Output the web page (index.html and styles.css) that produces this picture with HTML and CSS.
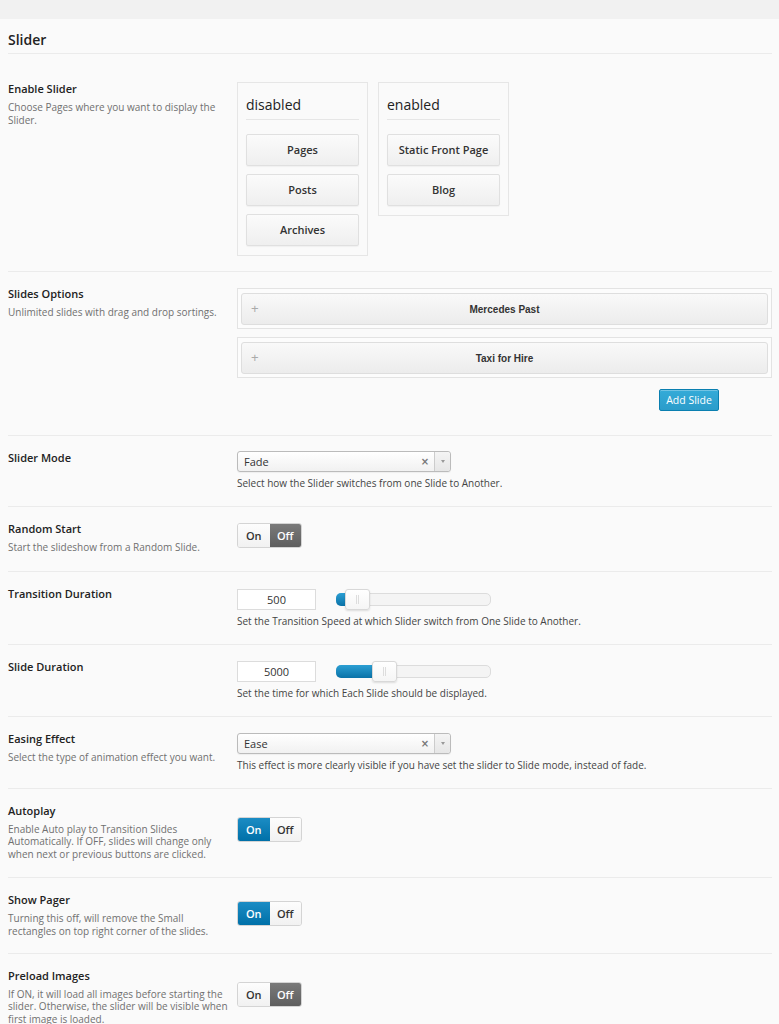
FILE: index.html
```html
<!DOCTYPE html>
<html>
<head>
<meta charset="utf-8">
<link rel="stylesheet" href="styles.css">
</head>
<body>
<div class="topbar"></div>
<div class="panel">
  <h2 class="panel-title">Slider</h2>

  <div class="row row-tight">
    <div class="label">
      <div class="title">Enable Slider</div>
      <div class="desc">Choose Pages where you want to display the Slider.</div>
    </div>
    <div class="field field-top1">
      <div class="sorters">
        <div class="sorter">
          <div class="sorter-head">disabled</div>
          <div class="sorter-list">
            <div class="chip">Pages</div>
            <div class="chip">Posts</div>
            <div class="chip">Archives</div>
          </div>
        </div>
        <div class="sorter">
          <div class="sorter-head">enabled</div>
          <div class="sorter-list">
            <div class="chip">Static Front Page</div>
            <div class="chip">Blog</div>
          </div>
        </div>
      </div>
    </div>
  </div>

  <div class="row">
    <div class="label">
      <div class="title">Slides Options</div>
      <div class="desc">Unlimited slides with drag and drop sortings.</div>
    </div>
    <div class="field field-top2">
      <div class="slides">
        <div class="slide"><div class="slide-bar"><span class="plus">+</span><span class="slide-name">Mercedes Past</span></div></div>
        <div class="slide"><div class="slide-bar"><span class="plus">+</span><span class="slide-name">Taxi for Hire</span></div></div>
      </div>
      <div class="add-wrap"><button class="add-btn">Add Slide</button></div>
    </div>
  </div>

  <div class="row">
    <div class="label">
      <div class="title">Slider Mode</div>
    </div>
    <div class="field field-top1">
      <div class="select"><span class="select-val">Fade</span><span class="select-x">×</span><span class="select-arrow"><span class="tri"></span></span></div>
      <div class="help">Select how the Slider switches from one Slide to Another.</div>
    </div>
  </div>

  <div class="row row-loose">
    <div class="label">
      <div class="title">Random Start</div>
      <div class="desc">Start the slideshow from a Random Slide.</div>
    </div>
    <div class="field field-center">
      <div class="toggle"><span class="tg">On</span><span class="tg tg-off-active">Off</span></div>
    </div>
  </div>

  <div class="row">
    <div class="label">
      <div class="title">Transition Duration</div>
    </div>
    <div class="field field-top3">
      <div class="range-row">
        <div class="num">500</div>
        <div class="track">
          <div class="fill" style="width: 14px"></div>
          <div class="handle" style="left: 8px"><span class="grip"></span></div>
        </div>
      </div>
      <div class="help">Set the Transition Speed at which Slider switch from One Slide to Another.</div>
    </div>
  </div>

  <div class="row">
    <div class="label">
      <div class="title">Slide Duration</div>
    </div>
    <div class="field field-top2">
      <div class="range-row">
        <div class="num">5000</div>
        <div class="track">
          <div class="fill" style="width: 42px"></div>
          <div class="handle" style="left: 35px"><span class="grip"></span></div>
        </div>
      </div>
      <div class="help">Set the time for which Each Slide should be displayed.</div>
    </div>
  </div>

  <div class="row">
    <div class="label">
      <div class="title">Easing Effect</div>
      <div class="desc">Select the type of animation effect you want.</div>
    </div>
    <div class="field field-top2">
      <div class="select"><span class="select-val">Ease</span><span class="select-x">×</span><span class="select-arrow"><span class="tri"></span></span></div>
      <div class="help">This effect is more clearly visible if you have set the slider to Slide mode, instead of fade.</div>
    </div>
  </div>

  <div class="row row-loose">
    <div class="label">
      <div class="title">Autoplay</div>
      <div class="desc">Enable Auto play to Transition Slides Automatically. If OFF, slides will change only when next or previous buttons are clicked.</div>
    </div>
    <div class="field field-center">
      <div class="toggle"><span class="tg tg-on-active">On</span><span class="tg">Off</span></div>
    </div>
  </div>

  <div class="row row-tight">
    <div class="label">
      <div class="title">Show Pager</div>
      <div class="desc">Turning this off, will remove the Small rectangles on top right corner of the slides.</div>
    </div>
    <div class="field field-center">
      <div class="toggle"><span class="tg tg-on-active">On</span><span class="tg">Off</span></div>
    </div>
  </div>

  <div class="row">
    <div class="label">
      <div class="title">Preload Images</div>
      <div class="desc">If ON, it will load all images before starting the slider. Otherwise, the slider will be visible when first image is loaded.</div>
    </div>
    <div class="field field-center">
      <div class="toggle"><span class="tg">On</span><span class="tg tg-off-active">Off</span></div>
    </div>
  </div>
</div>
</body>
</html>
```

FILE: styles.css
```css
* { box-sizing: border-box; }
html, body { margin: 0; padding: 0; }
body {
  background: #fafafa;
  font-family: "Open Sans", "Liberation Sans", sans-serif;
  color: #333;
}
.topbar { height: 19px; background: #f1f1f1; }
.panel { background: #fafafa; }
.panel-title {
  margin: 0 7px 13px 8px;
  padding: 11px 0 3px;
  font-size: 14px;
  line-height: 20px;
  font-weight: 600;
  color: #222;
  border-bottom: 1px solid #ebebeb;
}
.row {
  display: grid;
  grid-template-columns: 224px 1fr;
  column-gap: 5px;
  margin: 0 7px 0 8px;
  padding: 14px 0 16px;
  border-bottom: 1px solid #ebebeb;
}
.row-tight { padding-bottom: 15px; }
.row-loose { padding-bottom: 17px; }
.row:last-child { border-bottom: none; }
.title {
  font-size: 11px;
  line-height: 16px;
  font-weight: 600;
  color: #222;
}
.desc {
  margin-top: 4px;
  font-size: 10px;
  line-height: 12.6px;
  color: #707070;
  padding-right: 4px;
}
.field { min-width: 0; }
.field-top1 { padding-top: 1px; }
.field-top2 { padding-top: 2px; }
.field-top3 { padding-top: 3px; }
.field-center { align-self: center; margin-top: -3px; }
.help {
  margin-top: 5px;
  font-size: 10px;
  line-height: 13px;
  color: #444;
}

/* sorters */
.sorters { display: flex; gap: 10px; align-items: flex-start; }
.sorter {
  width: 131px;
  border: 1px solid #e6e6e6;
  background: #fafafa;
  padding: 0 8px 9px;
}
.sorter-head {
  padding: 12px 0 4px;
  font-size: 14px;
  line-height: 20px;
  color: #222;
  border-bottom: 1px solid #e6e6e6;
}
.sorter-list {
  display: flex;
  flex-direction: column;
  gap: 8px;
  margin-top: 14px;
}
.chip {
  height: 32px;
  border: 1px solid #e0e0e0;
  border-radius: 2px;
  background: linear-gradient(#fbfbfb, #efefef);
  box-shadow: 0 1px 1px rgba(0,0,0,0.04);
  font-size: 11px;
  font-weight: 600;
  line-height: 30px;
  text-align: center;
  color: #333;
  white-space: nowrap;
}

/* slides */
.slides { display: flex; flex-direction: column; gap: 8px; }
.slide {
  border: 1px solid #e3e3e3;
  background: #fcfcfc;
  padding: 4px 3px 3px;
}
.slide-bar {
  position: relative;
  height: 32px;
  border: 1px solid #dedede;
  border-radius: 3px;
  background: linear-gradient(#f9f9f9, #ececec);
  display: flex;
  align-items: center;
  justify-content: center;
}
.plus {
  position: absolute;
  left: 9px;
  top: 7px;
  font-family: "Liberation Sans", sans-serif;
  font-size: 13px;
  color: #aaa;
}
.slide-name {
  font-family: "Liberation Sans", Arial, sans-serif;
  font-size: 10px;
  font-weight: bold;
  color: #333;
}
.add-wrap { display: flex; justify-content: flex-end; padding-right: 53px; margin-top: 11px; margin-bottom: 8px; }
.add-btn {
  width: 60px;
  height: 22px;
  padding: 0;
  border: 1px solid #0a7fb0;
  border-radius: 2px;
  background: linear-gradient(#34abd8, #2b9cca);
  color: #fff;
  font-family: "Open Sans", sans-serif;
  font-size: 10.5px;
  line-height: 20px;
  box-shadow: inset 0 1px 0 rgba(255,255,255,0.3);
}

/* select */
.select {
  width: 214px;
  height: 21px;
  border: 1px solid #bbb;
  border-radius: 3px;
  background: linear-gradient(#ffffff, #f1f1f1);
  display: flex;
  align-items: center;
  box-shadow: 0 1px 1px rgba(0,0,0,0.05);
}
.select-val {
  flex: 1;
  padding-left: 6px;
  font-size: 11px;
  color: #333;
}
.select-x {
  width: 14px;
  font-family: "DejaVu Sans", sans-serif;
  font-size: 10px;
  font-weight: bold;
  color: #777;
  text-align: center;
  margin-right: 2px;
}
.select-arrow {
  width: 16px;
  height: 100%;
  border-left: 1px solid #ccc;
  background: linear-gradient(#f4f4f4, #e6e6e6);
  border-radius: 0 3px 3px 0;
  display: flex;
  align-items: center;
  justify-content: center;
}
.tri {
  width: 0; height: 0;
  border-left: 2.5px solid transparent;
  border-right: 2.5px solid transparent;
  border-top: 3px solid #999;
}

/* toggle */
.toggle {
  display: inline-flex;
  width: 65px;
  height: 25px;
  border: 1px solid #d4d4d4;
  border-radius: 3px;
  overflow: hidden;
  background: #fafafa;
}
.tg {
  flex: 1;
  font-size: 11px;
  font-weight: 600;
  line-height: 23px;
  text-align: center;
  color: #333;
  background: linear-gradient(#fdfdfd, #f1f1f1);
}
.tg-off-active {
  background: linear-gradient(#7a7a7a, #5e5e5e);
  color: #fff;
}
.tg-on-active {
  background: linear-gradient(#1b8cc4, #0070a8);
  color: #fff;
}

/* range */
.range-row { display: flex; align-items: center; gap: 20px; height: 21px; }
.num {
  width: 79px;
  height: 21px;
  border: 1px solid #dcdcdc;
  background: #fff;
  font-size: 11px;
  line-height: 19px;
  text-align: center;
  color: #333;
}
.track {
  position: relative;
  width: 155px;
  height: 13px;
  border: 1px solid #dcdcdc;
  border-radius: 5px;
  background: #f4f4f4;
}
.fill {
  position: absolute;
  left: -1px; top: -1px; bottom: -1px;
  border-radius: 5px 0 0 5px;
  background: linear-gradient(#2b9fd3, #0a72a8);
}
.handle {
  position: absolute;
  top: -5px;
  width: 25px;
  height: 21px;
  border: 1px solid #d8d8d8;
  border-radius: 3px;
  background: linear-gradient(#ffffff, #f5f5f5);
  box-shadow: 0 1px 2px rgba(0,0,0,0.12);
  display: flex;
  align-items: center;
  justify-content: center;
}
.grip {
  width: 3px;
  height: 9px;
  border-left: 1px solid #ddd;
  border-right: 1px solid #ddd;
}
```
